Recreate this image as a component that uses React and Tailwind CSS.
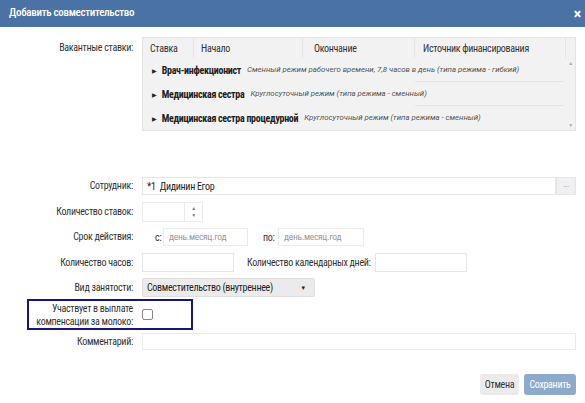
import React from "react";

const font = { fontFamily: "Roboto, 'Noto Sans', sans-serif" };

function Label({ children, className = "" }) {
  return (
    <div className={"w-[133px] shrink-0 text-right text-[10px] leading-[12px] text-[#333] whitespace-nowrap " + className}>
      {children}
    </div>
  );
}

const rows = [
  { name: "Врач-инфекционист", desc: "Сменный режим рабочего времени, 7,8 часов в день (типа режима - гибкий)" },
  { name: "Медицинская сестра", desc: "Круглосуточный режим (типа режима - сменный)" },
  { name: "Медицинская сестра процедурной", desc: "Круглосуточный режим (типа режима - сменный)" },
];

export default function App() {
  return (
    <div className="w-[585px] h-[403px] bg-white flex flex-col overflow-hidden font-stretch-[75%] tracking-[-0.3px]" style={font}>
      <div className="h-[27px] shrink-0 bg-[#4b72a4] flex items-center justify-between pl-[9px] pr-[4px] text-white">
        <span className="text-[11px] font-medium">Добавить совместительство</span>
        <span className="text-[14px] font-bold leading-none font-stretch-[100%]">×</span>
      </div>

      <div className="flex flex-col">
        {/* Vacancies */}
        <div className="flex mt-[10px]">
          <Label className="pt-[5px]">Вакантные ставки:</Label>
          <div className="ml-[9px] w-[434px] h-[94px] bg-[#f2f2f2] border border-[#e4e4e4] flex">
            <div className="flex-1 flex flex-col">
              <div className="h-[21px] flex text-[10px] text-[#333] items-center">
                <div className="w-[51px] h-full flex items-center pl-[7px] border-r border-[#e6e6e6]">Ставка</div>
                <div className="w-[109px] h-full flex items-center pl-[7px] border-r border-[#e6e6e6]">Начало</div>
                <div className="w-[112px] h-full flex items-center pl-[11px] border-r border-[#e6e6e6]">Окончание</div>
                <div className="w-[151px] h-full flex items-center pl-[8px] border-r border-[#e6e6e6]">Источник финансирования</div>
              </div>
              <div className="flex flex-col">
                {rows.map((r, i) => (
                  <div key={i} className="h-[24px] flex items-center pl-[9px] relative">
                    <span className="text-[6px] text-[#222] mr-[5px] font-stretch-[100%]">▶</span>
                    <span className="text-[10px] font-bold text-[#222] whitespace-nowrap">{r.name}</span>
                    <span className="ml-[6px] text-[7.8px] italic text-[#555] whitespace-nowrap font-stretch-[100%] tracking-normal">{r.desc}</span>
                    {i < 2 && (
                      <div className="absolute left-[272px] right-[3px] bottom-0 h-px bg-[#e3e3e3]" />
                    )}
                  </div>
                ))}
              </div>
            </div>
            <div className="w-[10px] flex flex-col justify-between items-center pt-[22px] pb-[1px] text-[5px] text-[#aaa] font-stretch-[100%]">
              <span>▲</span>
              <span>▼</span>
            </div>
          </div>
        </div>

        {/* Employee */}
        <div className="flex items-center mt-[46px]">
          <Label>Сотрудник:</Label>
          <div className="ml-[9px] flex w-[434px] h-[18px]">
            <div className="flex-1 border border-[#e6e6e6] flex items-center pl-[4px] text-[10px] text-[#222]">*1&nbsp; Дидинин Егор</div>
            <div className="w-[20px] bg-[#f0f0f0] border border-[#e6e6e6] flex items-center justify-center text-[8px] text-[#999] leading-none pb-[3px]">...</div>
          </div>
        </div>

        {/* Stavok */}
        <div className="flex items-center mt-[7px]">
          <Label>Количество ставок:</Label>
          <div className="ml-[9px] flex h-[20px]">
            <div className="w-[43px] border border-[#ececec]" />
            <div className="w-[18px] border border-[#ececec] border-l-0 flex flex-col items-center justify-center text-[5px] text-[#777] leading-[7px] font-stretch-[100%]">
              <span>▲</span>
              <span>▼</span>
            </div>
          </div>
        </div>

        {/* Srok */}
        <div className="flex items-center mt-[6px]">
          <Label>Срок действия:</Label>
          <div className="ml-[9px] flex items-center h-[18px] text-[10px]">
            <span className="ml-[13px] w-[8px] text-[#333]">с:</span>
            <div className="w-[85px] h-[18px] border border-[#ececec] flex items-center pl-[5px] text-[9.5px] text-[#999]">день.месяц.год</div>
            <span className="ml-[15px] w-[15px] text-[#333]">по:</span>
            <div className="w-[86px] h-[18px] border border-[#ececec] flex items-center pl-[5px] text-[9.5px] text-[#999]">день.месяц.год</div>
          </div>
        </div>

        {/* Chasov */}
        <div className="flex items-center mt-[7px]">
          <Label>Количество часов:</Label>
          <div className="ml-[9px] flex items-center">
            <div className="w-[92px] h-[19px] border border-[#e6e6e6]" />
            <span className="ml-[13px] w-[128px] text-[10px] text-[#333] whitespace-nowrap">Количество календарных дней:</span>
            <div className="w-[92px] h-[19px] border border-[#e6e6e6]" />
          </div>
        </div>

        {/* Vid */}
        <div className="flex items-center mt-[6px]">
          <Label>Вид занятости:</Label>
          <div className="ml-[9px] w-[173px] h-[19px] bg-[#ebebeb] border border-[#dedede] rounded-[2px] flex items-center justify-between pl-[4px] pr-[8px] text-[10px] text-[#222]">
            <span>Совместительство (внутреннее)</span>
            <span className="text-[6px] font-stretch-[100%]">▼</span>
          </div>
        </div>

        {/* Milk */}
        <div className="flex mt-[2px]">
          <div className="ml-[27px] w-[166px] h-[31px] border-2 border-[#151580] flex items-center">
            <div className="w-[104px] text-right text-[10px] leading-[13px] text-[#333] whitespace-nowrap">
              Участвует в выплате<br />компенсации за молоко:
            </div>
            <div className="ml-[9px] w-[11px] h-[11px] border border-[#888] rounded-[2px] bg-white" />
          </div>
        </div>

        {/* Comment */}
        <div className="flex items-center mt-[3px]">
          <Label>Комментарий:</Label>
          <div className="ml-[9px] w-[434px] h-[17px] border border-[#ececec]" />
        </div>

        {/* Buttons */}
        <div className="flex justify-end mt-[24px] pr-[9px] gap-[5px]">
          <div className="w-[39px] h-[21px] bg-[#ebebeb] rounded-[3px] flex items-center justify-center text-[10px] text-[#333]">Отмена</div>
          <div className="w-[52px] h-[21px] bg-[#8eaaca] rounded-[3px] flex items-center justify-center text-[10px] text-white">Сохранить</div>
        </div>
      </div>
    </div>
  );
}
